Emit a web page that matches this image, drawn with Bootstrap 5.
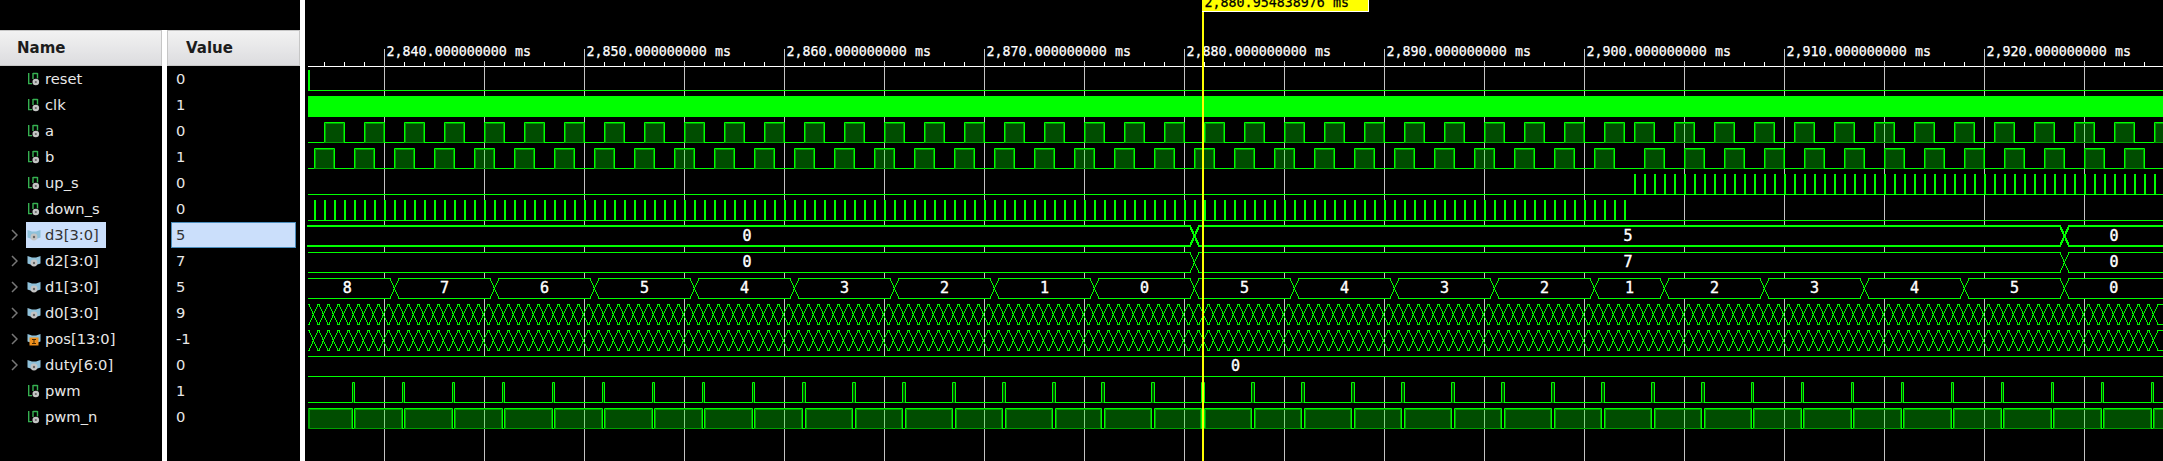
<!DOCTYPE html>
<html lang="en">
<head>
    <meta charset="UTF-8">
    <title>Waveform viewer</title>
    <link href="https://cdn.jsdelivr.net/npm/bootstrap@5.3.0/dist/css/bootstrap.min.css" rel="stylesheet">
    <style>
        html, body { height: 461px; overflow: hidden; background: #000; }
        body { font-family: "DejaVu Sans", sans-serif; font-size: 14.7px; color: #e8e8e8; }
        .left-side { width: 300px; height: 431px; margin-top: 30px; gap: 5px; background: #fff; flex: none; }
        .sash { width: 5px; height: 461px; background: #fff; flex: none; }
        .name-pane { width: 162px; background: #000; flex: none; }
        .value-pane { width: 133px; background: #000; flex: none; }
        .col-head {
            height: 36px; font-weight: 700; font-size: 15px; color: #1c1c1c; padding-top: 1px;
            background: linear-gradient(#f2f2f2, #dcdcdf); border: 1px solid #c6c6c6; border-left-width: 0;
        }
        .name-pane .col-head { padding-left: 17px; }
        .value-pane .col-head { padding-left: 18px; border-left-width: 1px; }
        .sig-row { height: 26px; line-height: 26px; }
        .chev-box { width: 26px; flex: none; padding-left: 11px; }
        .sig-label { height: 26px; padding: 0 7px 0 1px; gap: 4px; }
        .sig-icon { width: 14px; height: 14px; flex: none; }
        .val-cell { margin: 0 4px; padding-left: 4px; border: 1px solid transparent; height: 26px; line-height: 24px; flex: 1; }
        .is-selected { background: #cbdffb; color: #333; }
        .val-cell.is-selected { border-color: #4b8dbd; }
        .wave-pane { flex: 1; height: 461px; }
        .wave-pane svg { display: block; }
        .wave-edge { shape-rendering: crispEdges; }
        .tick-text { font-family: "DejaVu Sans Mono", monospace; font-size: 13.33px; fill: #fff; stroke: #fff; stroke-width: .25px; }
        .bus-text { font-family: "DejaVu Sans Mono", monospace; font-size: 15px; fill: #fff; stroke: #fff; stroke-width: .4px; }
        .cursor-text { font-family: "DejaVu Sans Mono", monospace; font-size: 13.33px; fill: #000; stroke: #000; stroke-width: .25px; }
    </style>
    <script src="https://cdn.jsdelivr.net/npm/bootstrap@5.3.0/dist/js/bootstrap.bundle.min.js"></script>
    <script>
        document.addEventListener("DOMContentLoaded", () => {
            const signals = [
                { name: "reset", value: "0", kind: "bit" },
                { name: "clk", value: "1", kind: "bit" },
                { name: "a", value: "0", kind: "bit" },
                { name: "b", value: "1", kind: "bit" },
                { name: "up_s", value: "0", kind: "bit" },
                { name: "down_s", value: "0", kind: "bit" },
                { name: "d3[3:0]", value: "5", kind: "bus", selected: true },
                { name: "d2[3:0]", value: "7", kind: "bus" },
                { name: "d1[3:0]", value: "5", kind: "bus" },
                { name: "d0[3:0]", value: "9", kind: "bus" },
                { name: "pos[13:0]", value: "-1", kind: "int" },
                { name: "duty[6:0]", value: "0", kind: "bus" },
                { name: "pwm", value: "1", kind: "bit" },
                { name: "pwm_n", value: "0", kind: "bit" }
            ];

            const icons = {
                bit: '<svg class="sig-icon" viewBox="0 0 14 14"><path d="M1.7 1V11.6H5M6 1V7M10.5 1V6.5M6 1.5H10.5" fill="none" stroke="#35b050" stroke-width="1.4"/><circle cx="8.8" cy="10" r="3.3" fill="#c4c4c4"/><circle cx="8.8" cy="10" r="1.1" fill="#666"/></svg>',
                bus: '<svg class="sig-icon" viewBox="0 0 14 14"><path d="M.5 2L5 3.5H9L13.5 2V9.5L9 11H5L.5 9.5Z" fill="#8fc1da"/><circle cx="7" cy="9" r="3.4" fill="#c4c4c4"/><circle cx="7" cy="9" r="1.2" fill="#666"/></svg>',
                int: '<svg class="sig-icon" viewBox="0 0 14 14"><path d="M.5 2L5 3.5H9L13.5 2V9.5L9 11H5L.5 9.5Z" fill="#8fc1da"/><rect x="2.5" y="5.5" width="9" height="8" fill="#f0901c"/><path d="M5 7.5H9M7 7.5V11.5M5 11.5H9" stroke="#4a2a00" stroke-width="1" fill="none"/></svg>'
            };
            const chevron = '<svg width="7" height="12" viewBox="0 0 7 12" class="d-block"><path d="M1 1L6 6L1 11" fill="none" stroke="#777" stroke-width="1.5"/></svg>';

            document.getElementById("nameRows").innerHTML = signals.map(s => `
                <div class="sig-row d-flex align-items-center">
                    <div class="chev-box">${s.kind === "bit" ? "" : chevron}</div>
                    <div class="sig-label d-flex align-items-center ${s.selected ? "is-selected" : ""}">${icons[s.kind]}<span>${s.name}</span></div>
                </div>`).join("");
            document.getElementById("valueRows").innerHTML = signals.map(s => `
                <div class="sig-row d-flex"><div class="val-cell ${s.selected ? "is-selected" : ""}">${s.value}</div></div>`).join("");

            // waveform canvas, one row every 26px
            const LEFT = 308, RIGHT = 2170, GREEN = "#00ff00", DIM = "#00a000";
            const hi = i => 70.5 + 26 * i;
            const lo = i => 90.5 + 26 * i;
            let grid = "", traces = "", buses = "", texts = "";

            // ruler and grid
            grid += `<rect x="${LEFT}" y="66" width="1860" height="1" fill="#fff"/>`;
            for (let x = 324; x < 2163; x += 20) {
                if ((x - 384) % 100 !== 0) grid += `<rect x="${x}" y="62" width="1" height="4" fill="#fff"/>`;
            }
            for (let x = 384; x < 2163; x += 100) {
                const major = (x - 384) % 200 === 0;
                grid += `<rect x="${x}" y="${major ? 49 : 61}" width="1" height="${major ? 412 : 400}" fill="#c4c4c4"/>`;
                if (major) {
                    const label = 2840 + (x - 384) / 20;
                    texts += `<text class="tick-text" x="${x + 2.5}" y="56">2,${String(label).slice(1)}.000000000 ms</text>`;
                }
            }

            function line(x1, y1, x2, y2, color, width) {
                return `<line x1="${x1}" y1="${y1}" x2="${x2}" y2="${y2}" stroke="${color}" stroke-width="${width || 1}"/>`;
            }

            // a 1-bit trace, pulses is a list of [rise, fall]
            function bitTrace(i, pulses, openStart) {
                let s = "", last = LEFT;
                pulses.forEach(([x1, x2]) => {
                    const a = x1 + 0.5, b = x2 + 0.5;
                    if (x1 > last) s += line(last, lo(i), x1, lo(i), GREEN);
                    s += `<rect x="${a}" y="${hi(i)}" width="${b - a}" height="20" fill="${GREEN}" fill-opacity=".3"/>`;
                    if (x2 - x1 > 6) s += `<path d="M${a + 1} ${lo(i)}V${hi(i) + 1}H${b - 1}V${lo(i)}" fill="none" stroke="${DIM}"/>`;
                    s += line(a, lo(i), b, lo(i), DIM);
                    const open = openStart && x1 === LEFT;
                    s += `<path d="M${a} ${lo(i)}${open ? "M" + a + " " + hi(i) : "V" + hi(i)}H${b}V${lo(i) + 0.5}" fill="none" stroke="${GREEN}"/>`;
                    if (open) s += line(a, hi(i), a, lo(i), DIM);
                    last = x2;
                });
                if (last < RIGHT) s += line(last, lo(i), RIGHT, lo(i), GREEN);
                return s;
            }

            // narrow spikes, drawn solid
            function spikes(i, xs) {
                let s = line(LEFT, lo(i), RIGHT, lo(i), GREEN);
                xs.forEach(x => { s += `<rect x="${x}" y="${hi(i) - 0.5}" width="2" height="20" fill="${GREEN}"/>`; });
                return s;
            }

            // a bus row: crossings at xs, labels centred at the given x
            function busTrace(i, xs, labels, width) {
                const w = width || 1, half = 4.5;
                const top = w === 2 ? hi(i) - 0.5 : hi(i), bot = w === 2 ? lo(i) - 0.5 : lo(i), mid = (top + bot) / 2;
                let s = "";
                const edges = [LEFT - (w === 2 ? 1 : 0), ...xs, RIGHT];
                for (let k = 0; k < edges.length - 1; k++) {
                    const a = edges[k], b = edges[k + 1];
                    const startOpen = k === 0, endOpen = k === edges.length - 2;
                    let d = startOpen ? `M${a} ${top}` : `M${a} ${mid}L${a + half} ${top}`;
                    d += endOpen ? `H${b}V${bot}` : `H${b - half}L${b} ${mid}L${b - half} ${bot}`;
                    d += startOpen ? `H${a}` : `H${a + half}L${a} ${mid}`;
                    s += `<path class="wave-edge" d="${d}" fill="#000" stroke="${GREEN}" stroke-width="${w}"/>`;
                }
                labels.forEach(([text, x]) => {
                    texts += `<text class="bus-text" x="${x}" y="${mid + 4.5}" text-anchor="middle">${text}</text>`;
                });
                return s;
            }

            // reset: short pulse at the very start
            traces += line(LEFT, lo(0), RIGHT, lo(0), GREEN);
            traces += `<rect x="${LEFT}" y="70" width="2" height="20" fill="${GREEN}"/>`;
            // clk: too fast to resolve, solid band
            traces += `<rect x="${LEFT}" y="96" width="1860" height="21" fill="${GREEN}"/>`;

            // a and b, direction flips around x=1630
            const pulsesA = [], pulsesB = [];
            for (let x = 324; x <= 1604; x += 40) pulsesA.push([x, x + 20]);
            for (let x = 1634; x < 2170; x += 40) pulsesA.push([x, x + 20]);
            for (let x = 314; x <= 1594; x += 40) pulsesB.push([x, x + 20]);
            for (let x = 1644; x < 2170; x += 40) pulsesB.push([x, x + 20]);
            traces += bitTrace(2, pulsesA);
            traces += bitTrace(3, pulsesB);

            const upX = [], downX = [];
            for (let x = 1634; x < 2170; x += 10) upX.push(x);
            for (let x = 314; x <= 1624; x += 10) downX.push(x);
            traces += spikes(4, upX);
            traces += spikes(5, downX);

            // pwm and pwm_n
            const pwmPulses = [], pwmN = [];
            let prev = LEFT;
            for (let k = 0; 352 + 50 * k < 2170; k++) {
                const x = 352 + 50 * k - (k > 14 ? 1 : 0);
                const w = x < 800 ? 2 : x < 1710 ? 3 : 2;
                pwmPulses.push([x, x + w]);
                pwmN.push([prev, x]);
                prev = x + w;
            }
            pwmN.push([prev, 2170]);
            traces += bitTrace(12, pwmPulses);
            traces += bitTrace(13, pwmN, true);

            // buses
            buses += busTrace(6, [1194.5, 2064.5], [["0", 747], ["5", 1628], ["0", 2114]], 2);
            buses += busTrace(7, [1194.5, 2064.5], [["0", 747], ["7", 1628], ["0", 2114]]);
            const d1X = [394.5, 494.5, 594.5, 694.5, 794.5, 894.5, 994.5, 1094.5, 1194.5, 1294.5, 1394.5, 1494.5, 1594.5, 1664.5, 1764.5, 1864.5, 1964.5, 2064.5];
            const d1Labels = "8765432105432123450".split("");
            const d1Edges = [300, ...d1X, 2163];
            buses += busTrace(8, d1X, d1Labels.map((t, k) => [t, (d1Edges[k] + d1Edges[k + 1]) / 2]));
            buses += busTrace(11, [], [["0", 1235.5]]);

            // d0 and pos toggle every 10px, so no black fill here: grid shows through
            function fastBus(i) {
                const half = 4.5, top = hi(i), bot = lo(i), mid = (top + bot) / 2;
                let a = `M${LEFT} ${top}`, b = `M${LEFT} ${bot}`;
                for (let x = 313.5; x <= 2153.5; x += 10) {
                    a += `L${x - half} ${top}L${x} ${mid}L${x + half} ${bot}`;
                    b += `L${x - half} ${bot}L${x} ${mid}L${x + half} ${top}`;
                    [a, b] = [b, a];
                }
                a += `H${RIGHT}`;
                b += `H${RIGHT}`;
                return `<path class="wave-edge" d="${a}${b}" fill="none" stroke="${GREEN}"/>`;
            }
            traces += fastBus(9) + fastBus(10);

            // cursor and its flag, clipped by the top of the window
            const cursor = `<rect x="1202" y="11" width="2" height="450" fill="#ffff00"/>`
                + `<rect x="1202" y="-1" width="167" height="13" fill="#fff"/><rect x="1202" y="-1" width="166" height="12" fill="#ffff00"/>`
                + `<text class="cursor-text" x="1204.5" y="7">2,880.954838976 ms</text>`;

            document.getElementById("waves").innerHTML = grid + traces + buses + texts + cursor;
        });
    </script>
</head>
<body>
    <div class="d-flex">
        <div class="left-side d-flex">
            <div class="name-pane">
                <div class="col-head d-flex align-items-center">Name</div>
                <div id="nameRows"></div>
            </div>
            <div class="value-pane">
                <div class="col-head d-flex align-items-center">Value</div>
                <div id="valueRows"></div>
            </div>
        </div>
        <div class="sash"></div>
        <div class="wave-pane">
            <svg id="waves" width="1858" height="461" viewBox="305 0 1858 461" xmlns="http://www.w3.org/2000/svg"></svg>
        </div>
    </div>
</body>
</html>
